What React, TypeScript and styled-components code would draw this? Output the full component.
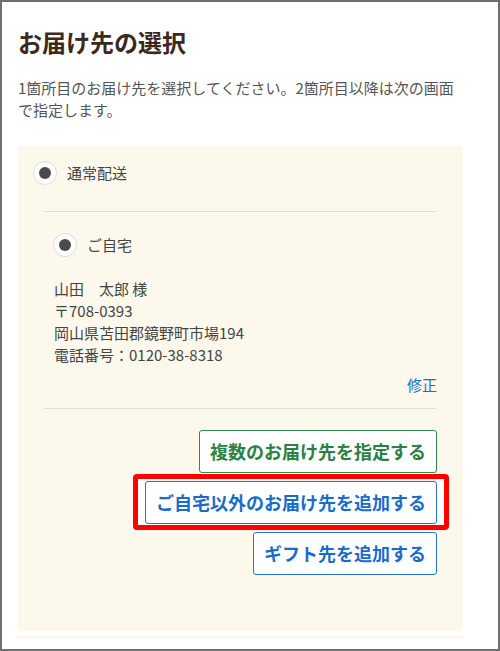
import React from 'react';
import styled, { createGlobalStyle } from 'styled-components';

const GlobalStyle = createGlobalStyle`
  * {
    box-sizing: border-box;
  }

  body {
    margin: 0;
    background: #ffffff;
    font-family: 'Noto Sans CJK JP', 'Noto Sans', sans-serif;
  }
`;

const Frame = styled.div`
  width: 500px;
  height: 651px;
  border: 2px solid #707070;
  padding: 24px 35px 0 16px;
  overflow: hidden;
  background: #ffffff;
`;

const Title = styled.h1`
  margin: 0 0 19px;
  font-size: 24px;
  line-height: 32px;
  font-weight: 700;
  color: #3b2a1c;
`;

const Lead = styled.p`
  margin: 0 0 25px;
  font-size: 15px;
  line-height: 22px;
  color: #555555;
`;

const Panel = styled.section`
  background: #fcf8ec;
  padding: 15px 26px 56px 15px;
`;

const PanelTail = styled.div`
  margin-top: 5px;
  height: 2px;
  background: #fcf8ec;
`;

const RadioRow = styled.label`
  display: flex;
  align-items: center;
  gap: 10px;
  font-size: 15px;
  line-height: 24px;
  color: #444444;
`;

const RadioMark = styled.span`
  width: 24px;
  height: 24px;
  border-radius: 50%;
  border: 1px solid #dcdcdc;
  background: #ffffff;
  display: flex;
  align-items: center;
  justify-content: center;
  flex-shrink: 0;

  &::after {
    content: '';
    width: 12px;
    height: 12px;
    border-radius: 50%;
    background: #4a4a4a;
  }
`;

const Inner = styled.div`
  margin: 26px 0 0 10px;
`;

const Divider = styled.hr`
  margin: 0;
  border: 0;
  border-top: 1px solid #dddddd;
`;

const HomeBlock = styled.div`
  padding: 21px 0 12px 10px;
`;

const Address = styled.p`
  margin: 21px 0 0 1px;
  font-size: 15px;
  line-height: 22px;
  color: #444444;
`;

const EditLink = styled.a`
  display: block;
  margin-top: 8px;
  text-align: right;
  font-size: 15px;
  line-height: 22px;
  color: #1a6fd3;
  text-decoration: none;
`;

const Actions = styled.div`
  padding-top: 21px;
  display: flex;
  flex-direction: column;
  align-items: flex-end;
  gap: 8px;
`;

type Tone = 'green' | 'blue';

const toneColors: Record<Tone, { text: string; border: string }> = {
  green: { text: '#2a8143', border: '#2e8b4c' },
  blue: { text: '#1a6ccc', border: '#2277d4' },
};

const ActionButton = styled.button<{ $tone: Tone }>`
  position: relative;
  z-index: 1;
  height: 43px;
  padding: 0 10px;
  border: 1px solid ${(p) => toneColors[p.$tone].border};
  border-radius: 3px;
  background: #ffffff;
  color: ${(p) => toneColors[p.$tone].text};
  font-family: 'Noto Sans CJK JP', 'Noto Sans', sans-serif;
  font-size: 18px;
  font-weight: 700;
  line-height: 25px;
  cursor: pointer;
`;

// red callout frame drawn around the highlighted action
const Highlight = styled.div`
  position: relative;
  display: flex;

  &::before {
    content: '';
    position: absolute;
    top: -7px;
    bottom: -6px;
    left: -12px;
    right: -12px;
    border: 5px solid #ff0000;
    border-radius: 4px;
    background: #ffffff;
    z-index: 1;
  }

  > button {
    z-index: 2;
  }
`;

export default function App() {
  return (
    <>
      <GlobalStyle />
      <Frame>
        <Title>お届け先の選択</Title>
        <Lead>
          1箇所目のお届け先を選択してください。2箇所目以降は次の画面で指定します。
        </Lead>
        <Panel>
          <RadioRow>
            <RadioMark />
            通常配送
          </RadioRow>
          <Inner>
            <Divider />
            <HomeBlock>
              <RadioRow>
                <RadioMark />
                ご自宅
              </RadioRow>
              <Address>
                山田　太郎 様
                <br />
                〒708-0393
                <br />
                岡山県苫田郡鏡野町市場194
                <br />
                電話番号：0120-38-8318
              </Address>
              <EditLink href="#">修正</EditLink>
            </HomeBlock>
            <Divider />
            <Actions>
              <ActionButton $tone="green">複数のお届け先を指定する</ActionButton>
              <Highlight>
                <ActionButton $tone="blue">ご自宅以外のお届け先を追加する</ActionButton>
              </Highlight>
              <ActionButton $tone="blue">ギフト先を追加する</ActionButton>
            </Actions>
          </Inner>
        </Panel>
        <PanelTail />
      </Frame>
    </>
  );
}
